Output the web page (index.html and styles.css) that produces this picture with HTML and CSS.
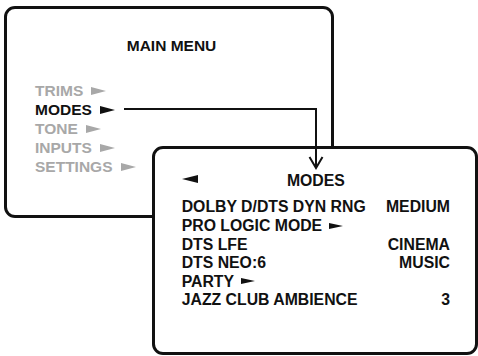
FILE: index.html
```html
<!DOCTYPE html>
<html>
<head>
<meta charset="utf-8">
<link rel="stylesheet" href="styles.css">
</head>
<body>
<div class="canvas">
  <div class="box main">
    <div class="title">MAIN MENU</div>
    <ul class="items">
      <li class="dim">TRIMS<span class="tri"></span></li>
      <li class="on">MODES<span class="tri"></span></li>
      <li class="dim">TONE<span class="tri"></span></li>
      <li class="dim">INPUTS<span class="tri"></span></li>
      <li class="dim">SETTINGS<span class="tri"></span></li>
    </ul>
  </div>
  <div class="box sub">
    <div class="head">
      <span class="back"></span>
      <span class="htitle">MODES</span>
      <span></span>
    </div>
    <ul class="rows">
      <li><span>DOLBY D/DTS DYN RNG</span><span>MEDIUM</span></li>
      <li><span>PRO LOGIC MODE<span class="tri small"></span></span></li>
      <li><span>DTS LFE</span><span>CINEMA</span></li>
      <li><span>DTS NEO:6</span><span>MUSIC</span></li>
      <li><span>PARTY<span class="tri small"></span></span></li>
      <li><span>JAZZ CLUB AMBIENCE</span><span>3</span></li>
    </ul>
  </div>
  <svg class="link" width="478" height="356" viewBox="0 0 478 356">
    <polyline points="124,109 316,109 316,168" fill="none" stroke="#111" stroke-width="2"/>
    <polyline points="309.5,157 316,168 322.5,157" fill="none" stroke="#111" stroke-width="2"/>
  </svg>
</div>
</body>
</html>
```
FILE: styles.css
```css
html, body {
  margin: 0;
  padding: 0;
  background: #fff;
}
.canvas {
  position: relative;
  width: 478px;
  height: 356px;
  overflow: hidden;
  font-family: "Liberation Sans", Arial, sans-serif;
  font-weight: bold;
  color: #111;
}
.box {
  position: absolute;
  box-sizing: border-box;
  border: 3px solid #111;
  border-radius: 11px;
  background: #fff;
}
.main {
  left: 4px;
  top: 6px;
  width: 330px;
  height: 212px;
  padding-top: 27px;
  font-size: 15.5px;
  line-height: 19px;
}
.title {
  text-align: center;
  padding-left: 5px;
  margin-bottom: 26px;
}
.items, .rows {
  list-style: none;
  margin: 0;
  padding: 0;
}
.items {
  padding-left: 28px;
}
.dim {
  color: #a8a8a8;
}
.tri {
  display: inline-block;
  width: 0;
  height: 0;
  border-left: 15px solid currentColor;
  border-top: 4px solid transparent;
  border-bottom: 4px solid transparent;
  margin-left: 8px;
  vertical-align: 1.5px;
}
.tri.small {
  border-left-width: 14px;
  border-top-width: 3.5px;
  border-bottom-width: 3.5px;
  margin-left: 7px;
  vertical-align: 2.5px;
}
.sub {
  left: 152px;
  top: 146px;
  width: 326px;
  height: 209px;
  padding: 22.5px 25px 0 26.7px;
  font-size: 15.8px;
  line-height: 18.6px;
}
.head {
  display: grid;
  grid-template-columns: 1fr auto 1fr;
  align-items: center;
  margin-bottom: 8.4px;
}
.back {
  justify-self: start;
  width: 0;
  height: 0;
  border-right: 16px solid #111;
  border-top: 4.5px solid transparent;
  border-bottom: 4.5px solid transparent;
  margin-left: 0;
  margin-top: -3px;
}
.rows li {
  display: flex;
  justify-content: space-between;
}
.link {
  position: absolute;
  left: 0;
  top: 0;
  pointer-events: none;
}
```
